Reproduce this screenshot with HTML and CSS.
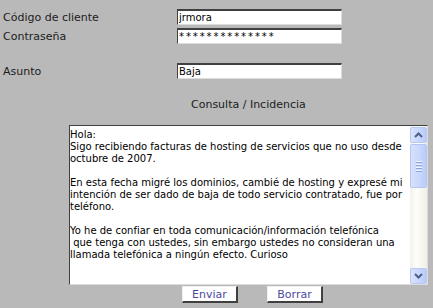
FILE: index.html
```html
<!DOCTYPE html>
<html lang="es">
<head>
    <meta charset="UTF-8">
    <title>Consulta / Incidencia</title>
    <link rel="stylesheet" href="styles.css">
</head>
<body>
    <form class="form">
        <div class="row">
            <label class="label" for="cliente">Código de cliente</label>
            <input class="field" type="text" id="cliente" value="jrmora">
        </div>
        <div class="row">
            <label class="label" for="pass">Contraseña</label>
            <input class="field field-pass" type="text" id="pass" value="**************">
        </div>
        <div class="row row-gap">
            <label class="label" for="asunto">Asunto</label>
            <input class="field" type="text" id="asunto" value="Baja">
        </div>

        <p class="title">Consulta / Incidencia</p>

        <div class="message">
            <textarea class="text" id="consulta">Hola:
Sigo recibiendo facturas de hosting de servicios que no uso desde octubre de 2007.

En esta fecha migré los dominios, cambié de hosting y expresé mi intención de ser dado de baja de todo servicio contratado, fue por teléfono.

Yo he de confiar en toda comunicación/información telefónica
 que tenga con ustedes, sin embargo ustedes no consideran una llamada telefónica a ningún efecto. Curioso</textarea>
            <div class="scrollbar">
                <div class="arrow">
                    <svg width="9" height="6" viewBox="0 0 9 6"><path d="M1 5 L4.5 1.5 L8 5" fill="none" stroke="#4d6185" stroke-width="2"/></svg>
                </div>
                <div class="thumb">
                    <span class="grip"></span>
                    <span class="grip"></span>
                    <span class="grip"></span>
                    <span class="grip"></span>
                </div>
                <div class="track"></div>
                <div class="arrow">
                    <svg width="9" height="6" viewBox="0 0 9 6"><path d="M1 1 L4.5 4.5 L8 1" fill="none" stroke="#4d6185" stroke-width="2"/></svg>
                </div>
            </div>
        </div>

        <div class="buttons">
            <button type="button" class="btn">Enviar</button>
            <button type="reset" class="btn">Borrar</button>
        </div>
    </form>
</body>
</html>
```

FILE: styles.css
```css
body {
    margin: 0;
    background: #b9b9b9;
    font-family: "DejaVu Sans", Verdana, sans-serif;
    color: #1c1c1c;
}

.form {
    padding: 9px 0 0 3px;
}

.row {
    display: flex;
    align-items: center;
    height: 16px;
    margin-bottom: 3px;
}

.row-gap {
    margin-top: 19px;
}

.label {
    width: 174px;
    font-size: 11px;
}

.field {
    box-sizing: border-box;
    width: 165px;
    height: 16px;
    padding: 0 0 0 1px;
    border-top: 2px solid #404040;
    border-left: 1px solid #404040;
    border-right: 1px solid #dcdcdc;
    border-bottom: 1px solid #dcdcdc;
    background: white;
    font-family: "DejaVu Sans", Verdana, sans-serif;
    font-size: 10px;
    color: #000;
}

.field-pass {
    letter-spacing: 1.9px;
}

.title {
    margin: 19px 0 0 188px;
    height: 23px;
    font-size: 11px;
}

.message {
    box-sizing: border-box;
    display: flex;
    width: 359px;
    height: 160px;
    margin: 4px 0 0 66px;
    background: white;
    border-top: 1px solid #404040;
    border-left: 1px solid #404040;
    border-right: 1px solid #dcdcdc;
    border-bottom: 1px solid #dcdcdc;
}

.text {
    flex: 1;
    height: 100%;
    box-sizing: border-box;
    padding: 3px 0 0 0;
    border: none;
    outline: none;
    font-family: "DejaVu Sans", Verdana, sans-serif;
    font-size: 10px;
    line-height: 12px;
    color: #000;
    resize: none;
    overflow: hidden;
}

.scrollbar {
    width: 17px;
    display: flex;
    flex-direction: column;
    background: linear-gradient(to right, #f3f1ea, #fdfdfb 40%, #f1efe6);
}

.arrow {
    box-sizing: border-box;
    height: 16px;
    margin-top: 1px;
    display: flex;
    align-items: center;
    justify-content: center;
    border: 1px solid #b8c9f3;
    border-radius: 2px;
    background: linear-gradient(to right, #d9e4fd, #c6d5fb 60%, #b9cbf7);
}

.thumb {
    box-sizing: border-box;
    height: 44px;
    margin-top: 1px;
    display: flex;
    flex-direction: column;
    align-items: center;
    justify-content: center;
    gap: 1px;
    border: 1px solid #b3c6f5;
    border-radius: 2px;
    background: linear-gradient(to right, #d6e2fd, #c7d6fb 60%, #bacbf6);
}

.grip {
    width: 6px;
    height: 1px;
    background: #eef3fe;
    border-bottom: 1px solid #8ca5e0;
}

.track {
    flex: 1;
}

.buttons {
    display: flex;
    gap: 29px;
    padding-left: 179px;
    margin-top: 1px;
}

.btn {
    box-sizing: border-box;
    width: 56px;
    height: 17px;
    padding: 0;
    background: white;
    border-top: 1px solid #f0f0f0;
    border-left: 1px solid #f0f0f0;
    border-right: 2px solid #404040;
    border-bottom: 2px solid #404040;
    font-family: "DejaVu Sans", Verdana, sans-serif;
    font-size: 11px;
    line-height: 13px;
    color: #4a4a9e;
}
```
